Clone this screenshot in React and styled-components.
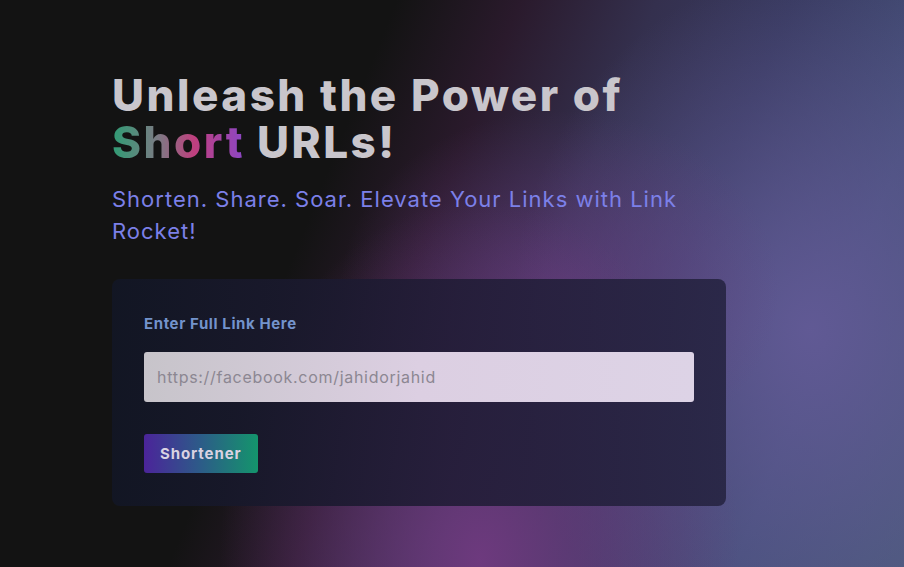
import React from "react";
import styled, { createGlobalStyle } from "styled-components";

const Global = createGlobalStyle`
  html, body { margin: 0; padding: 0; height: 100%; }
  body { background: #131313; font-family: Inter, "Noto Sans", sans-serif; }
  #root { min-height: 100%; }
`;

const Page = styled.main`
  min-height: 567px;
  box-sizing: border-box;
  padding: 72px 112px 0;
  overflow: hidden;
  background:
    radial-gradient(ellipse 260px 360px at 480px 560px, rgba(112, 58, 128, 0.95), rgba(112, 58, 128, 0) 100%),
    radial-gradient(ellipse 220px 180px at 560px 290px, rgba(104, 60, 128, 0.65), rgba(104, 60, 128, 0) 100%),
    radial-gradient(ellipse 300px 360px at 810px 330px, rgba(98, 90, 150, 0.95), rgba(98, 90, 150, 0) 100%),
    linear-gradient(112deg, #131313 0%, #131313 35%, #2a1a2c 46%, #34304e 58%, #383a60 70%, #46507a 85%, #4a5a7a 100%);
`;

const Content = styled.div`
  max-width: 614px;
  display: flex;
  flex-direction: column;
`;

const Title = styled.h1`
  margin: 0;
  max-width: 560px;
  font-size: 44px;
  line-height: 47px;
  font-weight: 800;
  color: #c9c6cc;
  letter-spacing: 2.5px;
`;

const GradientWord = styled.span`
  background: linear-gradient(90deg, #2f9c74 0%, #7d7a84 35%, #c03f7e 62%, #8a47c6 100%);
  -webkit-background-clip: text;
  background-clip: text;
  color: transparent;
`;

const Subtitle = styled.p`
  margin: 17px 0 0;
  max-width: 600px;
  font-size: 22px;
  line-height: 32px;
  font-weight: 400;
  letter-spacing: 1px;
  color: #7c80e8;
`;

const Card = styled.form`
  margin-top: 32px;
  border-radius: 8px;
  padding: 32px 32px 33px;
  display: flex;
  flex-direction: column;
  align-items: flex-start;
  background: linear-gradient(90deg, rgba(18, 22, 36, 0.96) 0%, rgba(33, 28, 54, 0.9) 55%, rgba(38, 36, 66, 0.9) 100%);
`;

const Label = styled.label`
  font-size: 15px;
  font-weight: 700;
  line-height: 25px;
  letter-spacing: 0.6px;
  color: #7393cc;
`;

const Input = styled.input`
  margin-top: 16px;
  width: 100%;
  height: 50px;
  box-sizing: border-box;
  border: none;
  border-radius: 3px;
  padding: 0 13px;
  font-family: inherit;
  font-size: 16px;
  letter-spacing: 0.7px;
  background: linear-gradient(90deg, #c7c4ca 0%, #dccfe2 50%, #ddd3e6 100%);
  outline: none;
  &::placeholder { color: #8c8792; }
`;

const Button = styled.button`
  margin-top: 32px;
  height: 39px;
  padding: 0 16px;
  border: none;
  border-radius: 3px;
  font-family: inherit;
  font-size: 15px;
  font-weight: 700;
  letter-spacing: 0.9px;
  color: #d9d2e2;
  background: linear-gradient(90deg, #4b249a 0%, #2c5c88 50%, #14956c 100%);
  cursor: pointer;
`;

export default function App() {
  return (
    <>
      <Global />
      <Page>
        <Content>
          <Title>
            Unleash the Power of <GradientWord>Short</GradientWord> URLs!
          </Title>
          <Subtitle>Shorten. Share. Soar. Elevate Your Links with Link Rocket!</Subtitle>
          <Card onSubmit={(e) => e.preventDefault()}>
            <Label htmlFor="url">Enter Full Link Here</Label>
            <Input id="url" placeholder="https://facebook.com/jahidorjahid" />
            <Button type="submit">Shortener</Button>
          </Card>
        </Content>
      </Page>
    </>
  );
}
